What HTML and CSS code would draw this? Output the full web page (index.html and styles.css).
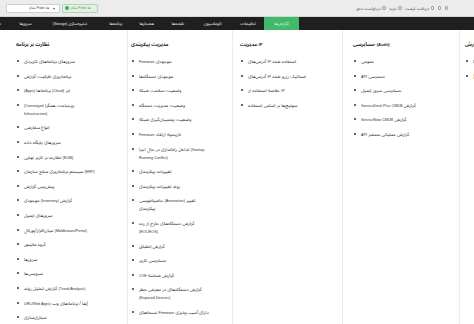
FILE: index.html
```html
<!DOCTYPE html>
<html lang="fa">
<head>
    <meta charset="UTF-8">
    <meta name="viewport" content="width=device-width, initial-scale=1.0">
    <title>گزارش‌ها</title>
    <link rel="stylesheet" href="styles.css">
</head>
<body>
    <!-- top strip: probe picker + quick links -->
    <div class="topbar">
        <div class="probe-select">
            <span>تمام <span class="en">Probe</span> ها</span>
            <span class="caret">▾</span>
        </div>
        <div class="probe-badge">
            <span class="probe-dot"></span>
            <span>تمام <span class="en">Probe</span> ها</span>
        </div>
        <div class="top-links">
            <span>درخواست دمو</span><span class="ring"></span>
            <span>خرید</span><span class="ring"></span>
            <span>دریافت قیمت</span><span class="ring"></span>
            <span class="ring"></span>
            <span class="ring"></span>
        </div>
    </div>

    <!-- main navigation -->
    <nav class="nav">
        <a class="active w-35">گزارش‌ها</a>
        <a class="w-31">تنظیمات</a>
        <a class="w-40">اتوماسیون</a>
        <a class="w-30">نقشه‌ها</a>
        <a class="w-31">هشدارها</a>
        <a class="w-30">برنامه‌ها</a>
        <a class="w-61">ذخیره‌سازی <span class="en">(Storage)</span></a>
        <a class="w-28">سرورها</a>
        <a class="w-30">شبکه</a>
    </nav>

    <!-- reports mega menu -->
    <div class="menu">
        <div class="col col-apps">
            <h2>نظارت بر برنامه</h2>
            <ul>
                <li>سرورهای برنامه‌های کاربردی</li>
                <li>برنامه‌ریزی ظرفیت گزارش</li>
                <li><span class="en">(Apps)</span> برنامه‌ها <span class="en">(Cloud)</span> ابر</li>
                <li><span class="en">(Converged</span> زیرساخت همگرا<br><span class="en">Infrastructure)</span></li>
                <li>انواع سفارشی</li>
                <li>سرورهای پایگاه داده</li>
                <li>نظارت بر کاربر نهایی <span class="en">(EUM)</span></li>
                <li>سیستم برنامه‌ریزی منابع سازمان <span class="en">(ERP)</span></li>
                <li>پیش‌بینی گزارش</li>
                <li>موجودی <span class="en">(Inventory)</span> گزارش</li>
                <li>سرورهای ایمیل</li>
                <li>میان‌افزار/پورتال <span class="en">(Middleware/Portal)</span></li>
                <li>گروه مانیتور</li>
                <li>سرورها</li>
                <li>سرویس‌ها</li>
                <li>گزارش تحلیل روند <span class="en">(Trend Analysis)</span></li>
                <li><span class="en">URL/Web Apps)</span> ها / برنامه‌های وب)</li>
                <li>مجازی‌سازی</li>
            </ul>
        </div>
        <div class="col col-config">
            <h2>مدیریت پیکربندی</h2>
            <ul>
                <li><span class="en">Firmware</span> موجودی</li>
                <li>موجودی دستگاه‌ها</li>
                <li>وضعیت سلامت شبکه</li>
                <li>وضعیت مدیریت دستگاه</li>
                <li>وضعیت پشتیبان‌گیری شبکه</li>
                <li><span class="en">Firmware</span> تاریخچه ارتقاء</li>
                <li>تداخل راه‌اندازی در حال اجرا <span class="en">(Startup-</span><br><span class="en">Running Conflict)</span></li>
                <li>تغییرات پیکربندی</li>
                <li>روند تغییرات پیکربندی</li>
                <li>حاشیه‌نویسی <span class="en">(Annotation)</span> تغییر<br>پیکربندی</li>
                <li>گزارش دستگاه‌های خارج از رده<br><span class="en">(EOL/EOS)</span></li>
                <li>گزارش انطباق</li>
                <li>حسابرسی کاربر</li>
                <li><span class="en">CVE</span> گزارش شناسه</li>
                <li>گزارش دستگاه‌های در معرض خطر<br><span class="en">(Exposed Devices)</span></li>
                <li>نسخه‌های <span class="en">Firmware</span> دارای آسیب‌پذیری</li>
            </ul>
        </div>
        <div class="col col-ip">
            <h2>مدیریت <span class="en">IP</span></h2>
            <ul>
                <li>آدرس‌های <span class="en">IP</span> استفاده شده</li>
                <li>آدرس‌های <span class="en">IP</span> استاتیک رزرو شده</li>
                <li>خلاصه استفاده از <span class="en">IP</span></li>
                <li>سوئیچ‌ها بر اساس استفاده</li>
            </ul>
        </div>
        <div class="col col-audit">
            <h2>حسابرسی <span class="en">(Audit)</span></h2>
            <ul>
                <li>عمومی</li>
                <li><span class="en">API</span> دسترسی</li>
                <li>حسابرسی سرور ایمیل</li>
                <li><span class="en">ServiceDesk Plus CMDB</span> گزارش</li>
                <li><span class="en">ServiceNow CMDB</span> گزارش</li>
                <li><span class="en">API</span> گزارش عملیاتی منتشر</li>
            </ul>
        </div>
        <div class="col col-more">
            <h2>گزارش</h2>
            <ul>
                <li>گزارش‌ها</li>
                <li>زمان‌بندی <span class="tag">جدید</span></li>
            </ul>
        </div>
    </div>
</body>
</html>
```

FILE: styles.css
```css
/* Reset */
* {
    box-sizing: border-box;
}

html, body {
    margin: 0;
    padding: 0;
}

body {
    width: 474px;
    height: 324px;
    overflow: hidden;
    background: #fff;
    color: #222;
    font-family: "Liberation Sans", "Noto Sans Arabic", "Noto Naskh Arabic", "DejaVu Sans", sans-serif;
}

/* latin words inside persian labels run a bit smaller */
.en {
    font-size: 0.8em;
}

/* Top strip */
.topbar {
    height: 17px;
    background: #ececec;
    border-bottom: 1px solid #d6d6d6;
    display: flex;
    align-items: center;
    padding: 0 6px;
    font-size: 4.2px;
}

.probe-select {
    width: 54px;
    height: 9px;
    background: #fff;
    border: 1px solid #cfcfcf;
    border-radius: 1px;
    display: flex;
    align-items: center;
    justify-content: flex-end;
    gap: 4px;
    padding-right: 4px;
    font-size: 3.8px;
    color: #444;
}

.caret {
    color: #555;
}

.probe-badge {
    margin-left: 2px;
    width: 36px;
    height: 9px;
    background: #e2f2e2;
    border: 1px solid #a8d8ae;
    border-radius: 2px;
    display: flex;
    align-items: center;
    gap: 2px;
    padding: 0 2px;
    font-size: 3.8px;
    color: #4f9a5c;
}

.probe-dot {
    width: 4px;
    height: 4px;
    border-radius: 50%;
    background: #3fae5a;
}

.top-links {
    margin-left: auto;
    margin-right: 18px;
    display: flex;
    align-items: center;
    gap: 1.5px;
    color: #555;
}

.ring {
    width: 3.5px;
    height: 3.5px;
    border: 0.7px solid #888;
    border-radius: 50%;
    margin-right: 2px;
}

/* Navigation */
.nav {
    height: 13px;
    background: #1f1f1f;
    display: flex;
    direction: rtl;
    padding-right: 175px;
    overflow: hidden;
    font-size: 4.3px;
    white-space: nowrap;
}

.nav a {
    flex: none;
    color: #f2f2f2;
    display: flex;
    align-items: center;
    justify-content: center;
    gap: 1px;
}

.nav a.active {
    background: #40b96b;
}

.w-28 { width: 28px; }
.w-30 { width: 30.5px; }
.w-31 { width: 31.5px; }
.w-35 { width: 35px; }
.w-40 { width: 39.5px; }
.w-61 { width: 61px; }

/* Mega menu */
.menu {
    display: flex;
    padding-left: 8px;
    height: 294px;
    overflow: hidden;
}

.col {
    flex: none;
    padding: 11px 0 0 8px;
    border-right: 1px solid #ececec;
}

.col-apps {
    width: 120px;
}

.col-config {
    width: 105px;
    padding-left: 3px;
}

.col-ip {
    width: 110px;
    padding-left: 7px;
}

.col-audit {
    width: 117px;
    padding-left: 10px;
}

.col-more {
    width: 60px;
    padding-left: 5px;
    border-right: none;
}

.col h2 {
    margin: 0 0 10px;
    font-size: 5px;
    line-height: 7px;
    font-weight: bold;
    color: #222;
    white-space: nowrap;
}

.col ul {
    list-style: none;
    margin: 0;
    padding: 0 0 0 1px;
}

.col li {
    padding-left: 7px;
    font-size: 4.7px;
    line-height: 8px;
    margin-bottom: 6.6px;
    color: #333;
    white-space: nowrap;
}

.col li::before {
    content: "";
    display: inline-block;
    width: 2px;
    height: 2px;
    margin-left: -7px;
    margin-right: 5px;
    vertical-align: 1px;
    border-radius: 50%;
    background: #333;
}

.tag {
    background: #f6e27a;
    color: #6a5a10;
    padding: 0 1px;
}
```
